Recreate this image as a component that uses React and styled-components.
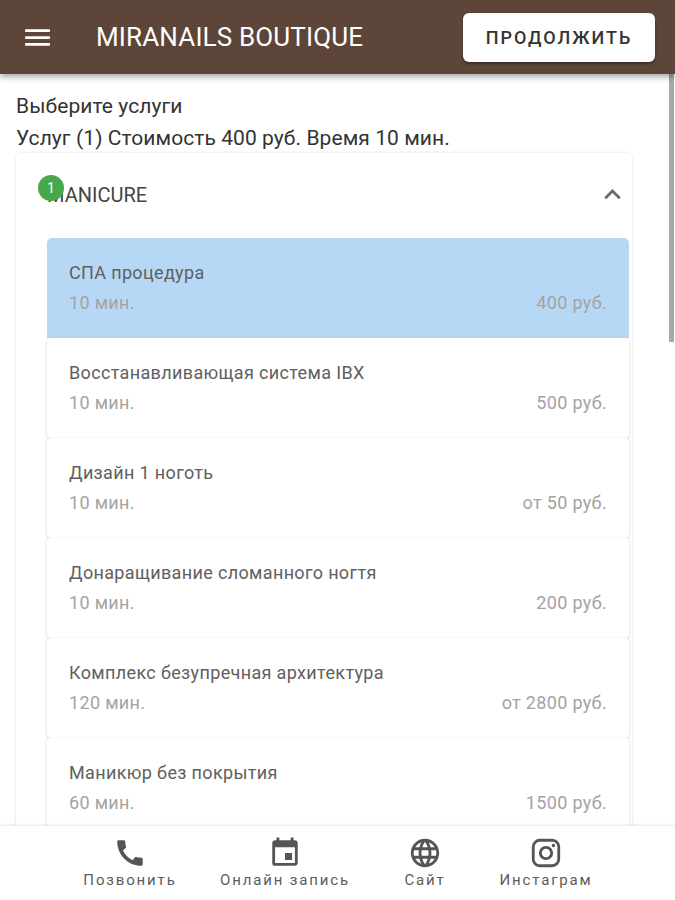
import React from 'react';
import styled, { createGlobalStyle } from 'styled-components';
import { MdMenu, MdExpandLess, MdCall, MdEvent, MdLanguage } from 'react-icons/md';

const services = [
	{ name: 'СПА процедура', time: '10 мин.', price: '400 руб.', selected: true },
	{ name: 'Восстанавливающая система IBX', time: '10 мин.', price: '500 руб.' },
	{ name: 'Дизайн 1 ноготь', time: '10 мин.', price: 'от 50 руб.' },
	{ name: 'Донаращивание сломанного ногтя', time: '10 мин.', price: '200 руб.' },
	{ name: 'Комплекс безупречная архитектура', time: '120 мин.', price: 'от 2800 руб.' },
	{ name: 'Маникюр без покрытия', time: '60 мин.', price: '1500 руб.' },
];

const InstagramIcon = () => (
	<svg width="34" height="34" viewBox="0 0 24 24" fill="currentColor">
		<path d="M7.8 2h8.4C19.4 2 22 4.6 22 7.8v8.4a5.8 5.8 0 0 1-5.8 5.8H7.8C4.6 22 2 19.4 2 16.2V7.8A5.8 5.8 0 0 1 7.8 2m-.2 2A3.6 3.6 0 0 0 4 7.6v8.8C4 18.39 5.61 20 7.6 20h8.8a3.6 3.6 0 0 0 3.6-3.6V7.6C20 5.61 18.39 4 16.4 4H7.6m9.65 1.5a1.25 1.25 0 0 1 1.25 1.25A1.25 1.25 0 0 1 17.25 8 1.25 1.25 0 0 1 16 6.75a1.25 1.25 0 0 1 1.25-1.25M12 7a5 5 0 0 1 5 5 5 5 0 0 1-5 5 5 5 0 0 1-5-5 5 5 0 0 1 5-5m0 2a3 3 0 0 0-3 3 3 3 0 0 0 3 3 3 3 0 0 0 3-3 3 3 0 0 0-3-3z" />
	</svg>
);

const App = () => (
	<Page>
		<GlobalStyle />
		<Header>
			<MenuButton><MdMenu size={33} /></MenuButton>
			<Title>MIRANAILS BOUTIQUE</Title>
			<ContinueButton>ПРОДОЛЖИТЬ</ContinueButton>
		</Header>
		<Content>
			<Scrollbar />
			<Caption>Выберите услуги</Caption>
			<Caption>Услуг (1) Стоимость 400 руб. Время 10 мин.</Caption>
			<Card>
				<CardHeader>
					<Badge>1</Badge>
					<CardTitle>MANICURE</CardTitle>
					<Chevron><MdExpandLess size={33} /></Chevron>
				</CardHeader>
				<ServiceList>
					{services.map((service) => (
						<Service key={service.name} selected={service.selected}>
							<ServiceName>{service.name}</ServiceName>
							<ServiceMeta>
								<span>{service.time}</span>
								<span>{service.price}</span>
							</ServiceMeta>
						</Service>
					))}
				</ServiceList>
			</Card>
		</Content>
		<BottomNav>
			<NavItem><MdCall size={34} /><NavLabel>Позвонить</NavLabel></NavItem>
			<NavItem><MdEvent size={34} /><NavLabel>Онлайн запись</NavLabel></NavItem>
			<NavItem><MdLanguage size={34} /><NavLabel>Сайт</NavLabel></NavItem>
			<NavItem><InstagramIcon /><NavLabel>Инстаграм</NavLabel></NavItem>
		</BottomNav>
	</Page>
);

const GlobalStyle = createGlobalStyle`
	html, body {
		margin: 0;
		height: 100%;
		background: #fff;
		overflow: hidden;
	}
	#root {
		height: 100%;
	}
`;

const Page = styled.div`
	display: flex;
	flex-direction: column;
	height: 900px;
	font-family: Roboto, sans-serif;
	color: #2b2b2b;
`;

const Header = styled.header`
	position: relative;
	z-index: 2;
	flex: 0 0 74px;
	display: flex;
	align-items: center;
	padding: 0 20px 0 21px;
	background: #5d4539;
	box-shadow: 0 3px 6px rgba(0, 0, 0, 0.35);
`;

const MenuButton = styled.div`
	display: flex;
	color: #fff;
`;

const Title = styled.div`
	margin-left: 42px;
	flex: 1;
	font-size: 26px;
	letter-spacing: 0.15px;
	color: #fff;
	white-space: nowrap;
`;

const ContinueButton = styled.button`
	width: 192px;
	height: 49px;
	border: 0;
	border-radius: 6px;
	background: #fff;
	color: #333;
	font-family: inherit;
	font-size: 18px;
	font-weight: 500;
	letter-spacing: 2px;
	box-shadow: 0 2px 3px rgba(0, 0, 0, 0.35);
`;

const Content = styled.main`
	position: relative;
	flex: 1;
	min-height: 0;
	overflow: hidden;
	padding: 16px 43px 0 16px;
`;

const Scrollbar = styled.div`
	position: absolute;
	top: 0;
	right: 1px;
	width: 5px;
	height: 268px;
	background: #a8a8a8;
`;

const Caption = styled.div`
	font-size: 21px;
	line-height: 32px;
	letter-spacing: 0.07px;
	color: #333;
`;

const Card = styled.section`
	margin: -1px 0 0 0;
	padding: 0 3px 0 31px;
	border-radius: 5px;
	background: #fff;
	box-shadow: 0 0 3px rgba(0, 0, 0, 0.14);
`;

const CardHeader = styled.div`
	position: relative;
	display: flex;
	align-items: center;
	justify-content: space-between;
	height: 83px;
	padding-bottom: 2px;
`;

const Badge = styled.div`
	position: absolute;
	top: 22px;
	left: -9px;
	width: 26px;
	height: 26px;
	border-radius: 50%;
	background: #46a84a;
	color: #fff;
	font-size: 14px;
	line-height: 26px;
	text-align: center;
`;

const CardTitle = styled.div`
	font-size: 20px;
	color: #444;
`;

const Chevron = styled.div`
	display: flex;
	color: #6a6a6a;
`;

const ServiceList = styled.div`
	display: flex;
	flex-direction: column;
`;

const Service = styled.div`
	display: flex;
	flex-direction: column;
	justify-content: center;
	height: 100px;
	box-sizing: border-box;
	padding: 0 22px;
	background: ${(props) => (props.selected ? '#b7d8f5' : '#fff')};
	border-radius: ${(props) => (props.selected ? '5px 5px 0 0' : '4px')};
	box-shadow: ${(props) => (props.selected ? 'none' : '0 1px 3px rgba(0, 0, 0, 0.2)')};
`;

const ServiceName = styled.div`
	font-size: 18px;
	line-height: 30px;
	letter-spacing: 0.35px;
	color: #606060;
`;

const ServiceMeta = styled.div`
	display: flex;
	justify-content: space-between;
	font-size: 18px;
	line-height: 30px;
	letter-spacing: 0.33px;
	color: #a3a3a3;
`;

const BottomNav = styled.nav`
	position: relative;
	z-index: 2;
	flex: 0 0 74px;
	display: grid;
	grid-template-columns: 172px 138px 142px 100px;
	padding-left: 44px;
	background: #fff;
	box-shadow: 0 -1px 3px rgba(0, 0, 0, 0.1);
`;

const NavItem = styled.div`
	display: flex;
	flex-direction: column;
	align-items: center;
	padding-top: 10px;
	color: #555;
`;

const NavLabel = styled.div`
	font-size: 15px;
	line-height: 20px;
	letter-spacing: 1.85px;
	color: #5c5c5c;
	white-space: nowrap;
`;

export default App;
